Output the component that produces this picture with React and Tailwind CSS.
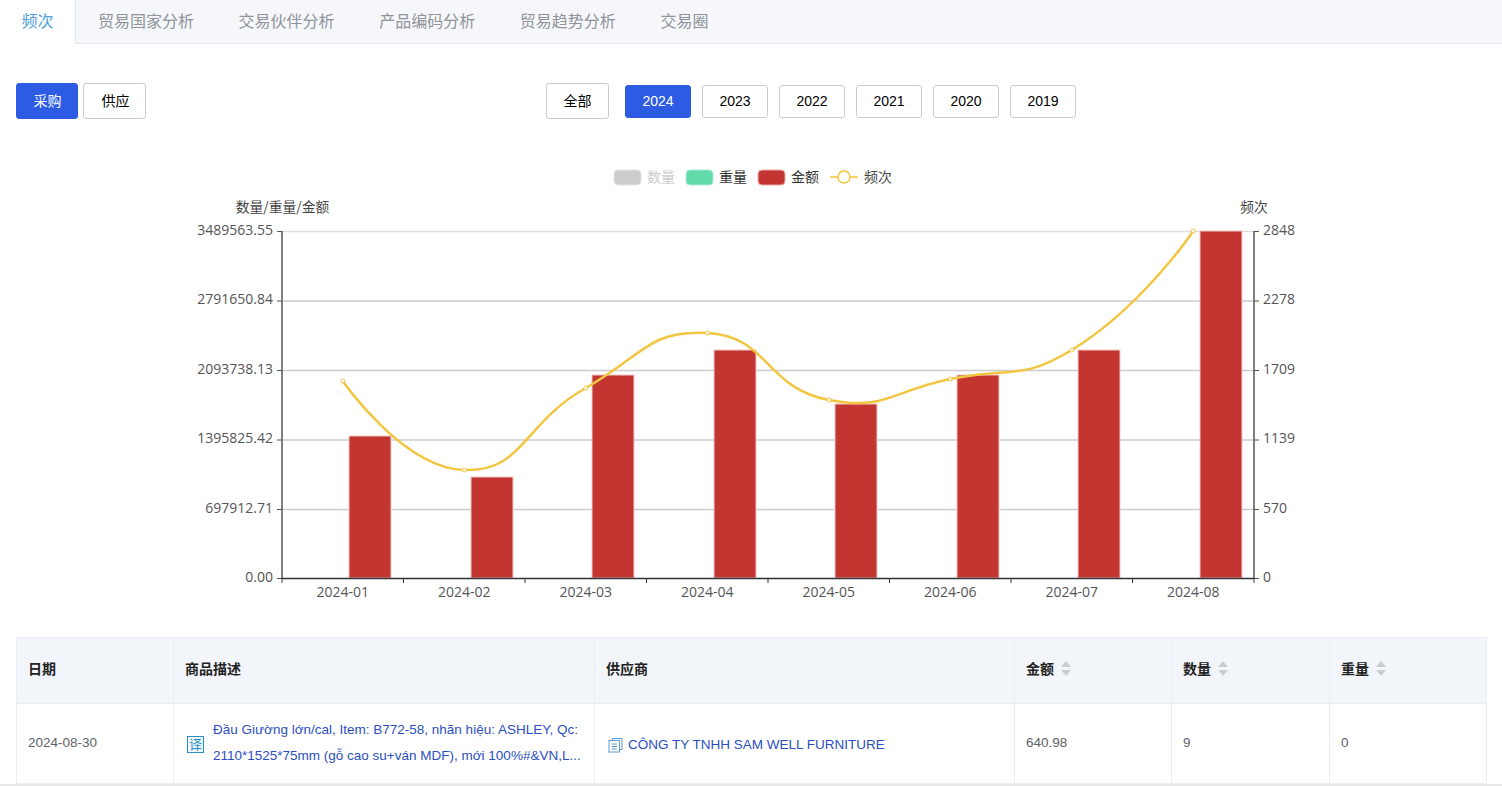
const cjk = '"Noto Sans CJK SC", sans-serif'

const tabs = ["贸易国家分析", "交易伙伴分析", "产品编码分析", "贸易趋势分析", "交易圈"]
const years = ["2023", "2022", "2021", "2020", "2019"]

const leftTicks = [
  ["3489563.55", 231],
  ["2791650.84", 300.5],
  ["2093738.13", 370],
  ["1395825.42", 439.5],
  ["697912.71", 509],
  ["0.00", 578],
]
const rightTicks = ["2848", "2278", "1709", "1139", "570", "0"]
const months = ["2024-01", "2024-02", "2024-03", "2024-04", "2024-05", "2024-06", "2024-07", "2024-08"]
const bars = [
  [349, 436],
  [471, 477],
  [592, 375],
  [714, 350],
  [835, 404],
  [957, 375],
  [1078, 350],
  [1200, 231],
]
const points = [
  [342.75, 381],
  [464.25, 470],
  [585.75, 388],
  [707.25, 333],
  [828.75, 400],
  [950.25, 379],
  [1071.75, 350],
  [1193.25, 231],
]

// same control points a smoothed chart line uses: tangent split by segment length
function smoothLine(pts) {
  const smooth = 0.5
  let d = `M${pts[0][0]} ${pts[0][1]}`
  let cp = pts[0]
  for (let i = 1; i < pts.length; i++) {
    const p = pts[i]
    if (i === pts.length - 1) {
      d += ` C${cp[0]} ${cp[1]} ${p[0]} ${p[1]} ${p[0]} ${p[1]}`
      break
    }
    const prev = pts[i - 1]
    const next = pts[i + 1]
    const dx = next[0] - prev[0]
    const dy = next[1] - prev[1]
    const lenPrev = Math.hypot(p[0] - prev[0], p[1] - prev[1])
    const lenNext = Math.hypot(next[0] - p[0], next[1] - p[1])
    const ratio = lenNext / (lenNext + lenPrev)
    const c2 = [p[0] - dx * smooth * (1 - ratio), p[1] - dy * smooth * (1 - ratio)]
    d += ` C${cp[0]} ${cp[1]} ${c2[0]} ${c2[1]} ${p[0]} ${p[1]}`
    cp = [p[0] + dx * smooth * ratio, p[1] + dy * smooth * ratio]
  }
  return d
}

function Chart() {
  return (
    <svg width="1502" height="490" viewBox="0 130 1502 490" className="block" style={{ fontFamily: '"Open Sans", "Noto Sans CJK SC", sans-serif' }}>
      {/* legend */}
      <rect x="614" y="170" width="27" height="15" rx="4" fill="#ccc" stroke="#e4e4e4" />
      <text x="647" y="181.500" fontSize="14" fill="#ccc" style={{ fontFamily: cjk }}>数量</text>
      <rect x="686" y="170" width="27" height="15" rx="4" fill="#61dba9" stroke="#a8edd0" />
      <text x="719" y="181.500" fontSize="14" fill="#333" style={{ fontFamily: cjk }}>重量</text>
      <rect x="758" y="170" width="27" height="15" rx="4" fill="#c23531" stroke="#eba9a7" />
      <text x="791" y="181.500" fontSize="14" fill="#333" style={{ fontFamily: cjk }}>金额</text>
      <line x1="830" y1="177" x2="858" y2="177" stroke="#f2c641" strokeWidth="1.5" />
      <circle cx="844" cy="177" r="6" fill="#fff" stroke="#f2c641" strokeWidth="1.5" />
      <text x="864" y="181.500" fontSize="14" fill="#444" style={{ fontFamily: cjk }}>频次</text>

      <text x="282.500" y="212" fontSize="13.800" fill="#444" textAnchor="middle" style={{ fontFamily: cjk }}>数量/重量/金额</text>
      <text x="1254" y="212" fontSize="13.800" fill="#444" textAnchor="middle" style={{ fontFamily: cjk }}>频次</text>

      {/* grid */}
      {leftTicks.slice(0, 5).map(([label, y]) => (
        <line key={label} x1="282" x2="1254" y1={y + 0.5} y2={y + 0.5} stroke={y === 231 ? "#ddd" : "#ccc"} strokeWidth="1.500" />
      ))}

      {/* bars */}
      {bars.map(([x, top]) => (
        <rect key={x} x={x} y={top} width="42" height={578 - top} fill="#c23531" stroke="#f0c8c6" strokeWidth="1" />
      ))}

      {/* axes */}
      <line x1="282" x2="282" y1="231" y2="579" stroke="#555" strokeWidth="1.500" />
      <line x1="1254" x2="1254" y1="231" y2="579" stroke="#555" strokeWidth="1.500" />
      <line x1="282" x2="1254" y1="578.500" y2="578.500" stroke="#333" strokeWidth="1.500" />
      {leftTicks.map(([label, y], i) => (
        <g key={label}>
          <line x1="277" x2="282" y1={y + 0.5} y2={y + 0.5} stroke="#555" />
          <line x1="1254" x2="1259" y1={y + 0.5} y2={y + 0.5} stroke="#555" />
          <text x="273" y={y + 3.500} fontSize="14" fill="#555" textAnchor="end">{label}</text>
          <text x="1263" y={y + 3.500} fontSize="14" fill="#555">{rightTicks[i]}</text>
        </g>
      ))}
      {months.map((m, i) => (
        <g key={m}>
          <line x1={282 + 121.5 * i} x2={282 + 121.5 * i} y1="578" y2="583" stroke="#333" />
          <text x={342.75 + 121.5 * i} y="597" fontSize="14" fill="#555" textAnchor="middle">{m}</text>
        </g>
      ))}
      <line x1="1254" x2="1254" y1="578" y2="583" stroke="#333" />

      {/* frequency line */}
      <path d={smoothLine(points)} fill="none" stroke="#f2c641" strokeWidth="2.500" />
      {points.map(([x, y]) => (
        <circle key={x} cx={x} cy={y} r="2" fill="#fff" stroke="#f2c641" strokeWidth="1" />
      ))}
    </svg>
  )
}

function SortHead({ label }) {
  return (
    <div className="flex items-center gap-[7px]">
      <span>{label}</span>
      <span className="flex flex-col gap-[3px]">
        <span className="w-0 h-0 border-x-[5px] border-x-transparent border-b-[6px] border-b-[#c8cdd4]" />
        <span className="w-0 h-0 border-x-[5px] border-x-transparent border-t-[6px] border-t-[#c8cdd4]" />
      </span>
    </div>
  )
}

export default function App() {
  return (
    <div className="h-screen overflow-hidden bg-white relative" style={{ fontFamily: '"Liberation Sans", "Noto Sans CJK SC", sans-serif' }}>
      <div className="flex h-11 bg-[#f5f7fa] border-b border-[#e4e7ed]">
        <div className="w-[76px] h-11 bg-white border-r border-[#e4e7ed] flex items-center justify-center text-base text-[#4f9fe0]">频次</div>
        <div className="flex pl-[22px] gap-[44.6px]">
          {tabs.map((t) => (
            <div key={t} className="flex items-center h-11 text-base text-[#909399]">{t}</div>
          ))}
        </div>
      </div>

      <div className="relative h-[86px] px-4 flex items-start pt-[39px]">
        <div className="flex gap-[5px]">
          <button className="w-[62px] h-9 pl-px rounded-[3px] bg-[#2d5be3] border border-[#2d5be3] text-white text-sm">采购</button>
          <button className="w-[63px] h-9 pl-0.5 rounded-[3px] bg-white border border-[#ccc] text-black text-sm">供应</button>
        </div>
        <div className="ml-[400px] flex items-center">
          <button className="w-[63px] h-9 rounded-[3px] bg-white border border-[#ccc] text-black text-sm">全部</button>
          <button className="w-[66px] h-[33px] ml-4 rounded-[3px] bg-[#2d5be3] border border-[#2d5be3] text-white text-sm">2024</button>
          <div className="flex gap-[11px] ml-[11px]">
            {years.map((y) => (
              <button key={y} className="w-[66px] h-[33px] rounded-[3px] bg-white border border-[#ccc] text-black text-sm">{y}</button>
            ))}
          </div>
        </div>
      </div>

      <Chart />

      <div className="pl-4 pt-[17px]">
        <table className="table-fixed border-collapse w-[1470px] text-[13.5px]">
          <colgroup>
            <col className="w-[157px]" />
            <col className="w-[421px]" />
            <col className="w-[420px]" />
            <col className="w-[157px]" />
            <col className="w-[158px]" />
            <col className="w-[157px]" />
          </colgroup>
          <thead>
            <tr className="h-[66px] bg-[#f2f6fa] text-sm text-[#222] text-left">
              <th className="border border-[#e8eef4] px-[11px] pb-1 font-bold">日期</th>
              <th className="border border-[#e8eef4] px-[11px] pb-1 font-bold">商品描述</th>
              <th className="border border-[#e8eef4] px-[11px] pb-1 font-bold">供应商</th>
              <th className="border border-[#e8eef4] px-[11px] pb-1 font-bold"><SortHead label="金额" /></th>
              <th className="border border-[#e8eef4] px-[11px] pb-1 font-bold"><SortHead label="数量" /></th>
              <th className="border border-[#e8eef4] px-[11px] pb-1 font-bold"><SortHead label="重量" /></th>
            </tr>
          </thead>
          <tbody>
            <tr className="h-[80px] text-[#606266]">
              <td className="border border-[#e8eef4] px-[11px]">2024-08-30</td>
              <td className="border border-[#e8eef4] pl-[13px] pr-[11px] pb-0.5">
                <div className="flex items-center gap-[9px]">
                  <span className="w-[17px] h-[17px] mt-[3px] shrink-0 border border-[#2e8fc4] bg-[#eef7fc] text-[#2e8fc4] text-[13px] leading-[15px] text-center">译</span>
                  <span className="leading-[26px] text-[#2b4fc0]">
                    Đầu Giường lớn/cal, Item: B772-58, nhãn hiệu: ASHLEY, Qc: 2110*1525*75mm (gỗ cao su+ván MDF), mới 100%#&VN,L...
                  </span>
                </div>
              </td>
              <td className="border border-[#e8eef4] px-[13px] pt-1">
                <div className="flex items-center gap-[5px] text-[#2b4fc0]">
                  <svg width="15" height="15" viewBox="0 0 15 15" fill="none" stroke="#5b9bd5" strokeWidth="1">
                    <path d="M4.500 2.500V.5h9.500v11h-2" />
                    <rect x="1" y="2.500" width="10.500" height="11.500" />
                    <path d="M3.500 6h5.500M3.500 8.500h5.500M3.500 11h5.500" />
                  </svg>
                  <span>CÔNG TY TNHH SAM WELL FURNITURE</span>
                </div>
              </td>
              <td className="border border-[#e8eef4] px-[11px]">640.98</td>
              <td className="border border-[#e8eef4] px-[11px]">9</td>
              <td className="border border-[#e8eef4] px-[11px]">0</td>
            </tr>
          </tbody>
        </table>
      </div>
      <div className="absolute left-0 right-0 bottom-0 h-[2px] bg-[#e8e8e8]" />
    </div>
  )
}
